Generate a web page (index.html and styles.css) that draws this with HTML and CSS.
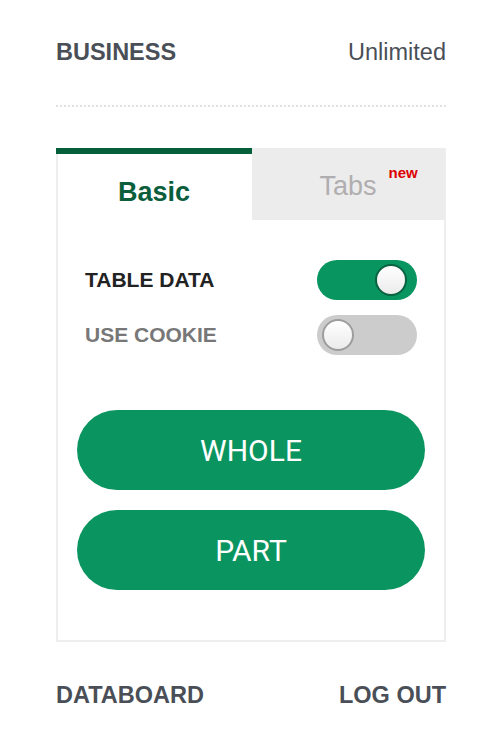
FILE: index.html
```html
<!DOCTYPE html>
<html>
<head>
<meta charset="utf-8">
<link rel="stylesheet" href="styles.css">
</head>
<body>
<div class="page">
  <div class="top-row">
    <span class="strong">BUSINESS</span>
    <span class="plan">Unlimited</span>
  </div>
  <div class="dots"></div>
  <div class="card">
    <div class="tabs">
      <div class="tab active">Basic</div>
      <div class="tab"><span class="tab-label">Tabs<span class="badge">new</span></span></div>
    </div>
    <div class="body">
      <div class="setting">
        <span class="setting-label on">TABLE DATA</span>
        <span class="switch switch-on"><span class="knob"></span></span>
      </div>
      <div class="setting">
        <span class="setting-label off">USE COOKIE</span>
        <span class="switch switch-off"><span class="knob"></span></span>
      </div>
      <div class="actions">
        <button class="btn">WHOLE</button>
        <button class="btn">PART</button>
      </div>
    </div>
  </div>
  <div class="bottom-row">
    <span class="strong">DATABOARD</span>
    <span class="strong">LOG OUT</span>
  </div>
</div>
</body>
</html>
```
FILE: styles.css
```css
* { box-sizing: border-box; }
html, body { margin: 0; padding: 0; background: #fff; }
body { font-family: "Liberation Sans", Arial, sans-serif; }
.page { padding: 38px 56px 0; }
.top-row, .bottom-row {
  display: flex;
  justify-content: space-between;
  font-size: 23.5px;
  line-height: 28px;
  color: #4a4f57;
}
.strong { font-weight: bold; }
.plan { font-weight: normal; }
.dots {
  margin-top: 39px;
  border-top: 2px dotted #e2e2e2;
}
.card {
  margin-top: 41px;
  border: 2px solid #eeeeee;
  border-top: 0;
}
.tabs { display: flex; }
.tab {
  flex: 1;
  height: 72px;
  padding-top: 22px;
  text-align: center;
  font-size: 27px;
  line-height: 32px;
}
.tab.active {
  border-top: 6px solid #065f3b;
  color: #0a5e3b;
  font-weight: bold;
  margin-left: -2px;
  flex: 0 0 196px;
}
.tab:not(.active) {
  background: #ececec;
  color: #b0aeb0;
}
.tab-label { position: relative; }
.badge {
  position: absolute;
  left: 100%;
  top: -6px;
  margin-left: 12px;
  font-size: 15px;
  line-height: 15px;
  font-weight: bold;
  color: #dd0000;
}
.body { padding: 40px 19px 50px; }
.setting {
  display: flex;
  justify-content: space-between;
  align-items: center;
  height: 40px;
  padding: 0 8px 0 8px;
}
.setting + .setting { margin-top: 15px; }
.setting-label { font-size: 21px; font-weight: bold; }
.setting-label.on { color: #222222; }
.setting-label.off { color: #777777; }
.switch {
  position: relative;
  width: 100px;
  height: 40px;
  border-radius: 20px;
}
.switch-on { background: #08955f; }
.switch-off { background: #cccccc; }
.knob {
  position: absolute;
  top: 4px;
  width: 32px;
  height: 32px;
  border-radius: 50%;
  background: linear-gradient(#ffffff, #ebebeb);
}
.switch-on .knob { right: 10px; border: 2px solid #0a6242; }
.switch-off .knob { left: 5px; border: 2px solid #9d9d9d; }
.actions {
  margin-top: 55px;
  display: flex;
  flex-direction: column;
  gap: 20px;
}
.btn {
  height: 80px;
  border: 0;
  border-radius: 40px;
  background: #0a9560;
  color: #ffffff;
  font-family: Roboto, "Liberation Sans", sans-serif;
  font-size: 30px;
  font-weight: 400;
}
.bottom-row { margin-top: 39px; }
```
